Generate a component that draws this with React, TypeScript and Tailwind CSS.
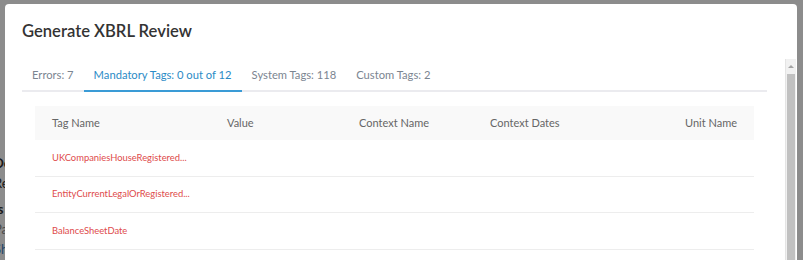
const tabs = [
  { label: "Errors: 7", active: false },
  { label: "Mandatory Tags: 0 out of 12", active: true },
  { label: "System Tags: 118", active: false },
  { label: "Custom Tags: 2", active: false },
]

const rows = ["UKCompaniesHouseRegistered...", "EntityCurrentLegalOrRegistered...", "BalanceSheetDate"]

function PageBehind() {
  // page content that peeks out on the left, under the backdrop
  return (
    <div className="flex flex-col pt-[153px] -ml-[6px] text-[13px] leading-[20px] text-[#333]">
      <span className="font-bold">Do</span>
      <span>Re:</span>
      <span className="font-bold mt-[6px]">Is</span>
      <span className="text-[#888]">Par</span>
      <span className="text-[#3a7bbf]">Sh</span>
    </div>
  )
}

function Scrollbar() {
  return (
    <div className="w-[11px] flex flex-col bg-[#f1f1f1] border-l border-[#e4e4e4]">
      <div className="h-[15px] flex items-center justify-center">
        <div className="w-0 h-0 border-l-[3px] border-r-[3px] border-b-[3px] border-l-transparent border-r-transparent border-b-[#a3a3a3]" />
      </div>
      <div className="flex-1 mx-[1px] bg-[#c1c1c1]" />
    </div>
  )
}

export default function App() {
  return (
    <div className="relative w-[803px] h-[260px] overflow-hidden bg-white" style={{ fontFamily: "Lato, 'Open Sans', sans-serif" }}>
      <PageBehind />

      <div className="absolute inset-0 bg-black/45" />

      <div className="absolute left-[5px] top-[4px] w-[792px] h-[300px] bg-white rounded-[4px] flex flex-col">
        <header className="h-[55px] px-[17px] flex items-center">
          <h2 className="text-[16.6px] font-semibold text-[#333]">Generate XBRL Review</h2>
        </header>

        <div className="flex flex-1 min-h-0">
          <div className="flex-1 pl-[17px] pr-[18px]">
            <nav className="flex border-b-2 border-[#ebebef] h-[33px]">
              {tabs.map((t) => (
                <div
                  key={t.label}
                  className={
                    t.active
                      ? "px-[10px] pt-[8px] text-[11.2px] text-[#2b8bc6] border-b-2 border-[#3a9bd6] -mb-[2px]"
                      : "px-[10px] pt-[8px] text-[11.2px] text-[#7b8591]"
                  }
                >
                  {t.label}
                </div>
              ))}
            </nav>

            <div className="px-[13px] pt-[14px]">
              <div className="grid grid-cols-[192px_132px_131px_131px_1fr] h-[34px] items-center bg-[#f9f9f9] text-[11px] text-[#666]">
                <div className="pl-[17px]">Tag Name</div>
                <div>Value</div>
                <div>Context Name</div>
                <div>Context Dates</div>
                <div className="text-right pr-[17px]">Unit Name</div>
              </div>
              {rows.map((r) => (
                <div
                  key={r}
                  className="grid grid-cols-[192px_132px_131px_131px_1fr] h-[36.6px] items-center border-b border-[#ededed] text-[9.4px] text-[#de4b4b]"
                >
                  <div className="pl-[17px]">{r}</div>
                  <div />
                  <div />
                  <div />
                  <div />
                </div>
              ))}
            </div>
          </div>

          <Scrollbar />
          <div className="w-[1px]" />
        </div>
      </div>
    </div>
  )
}
